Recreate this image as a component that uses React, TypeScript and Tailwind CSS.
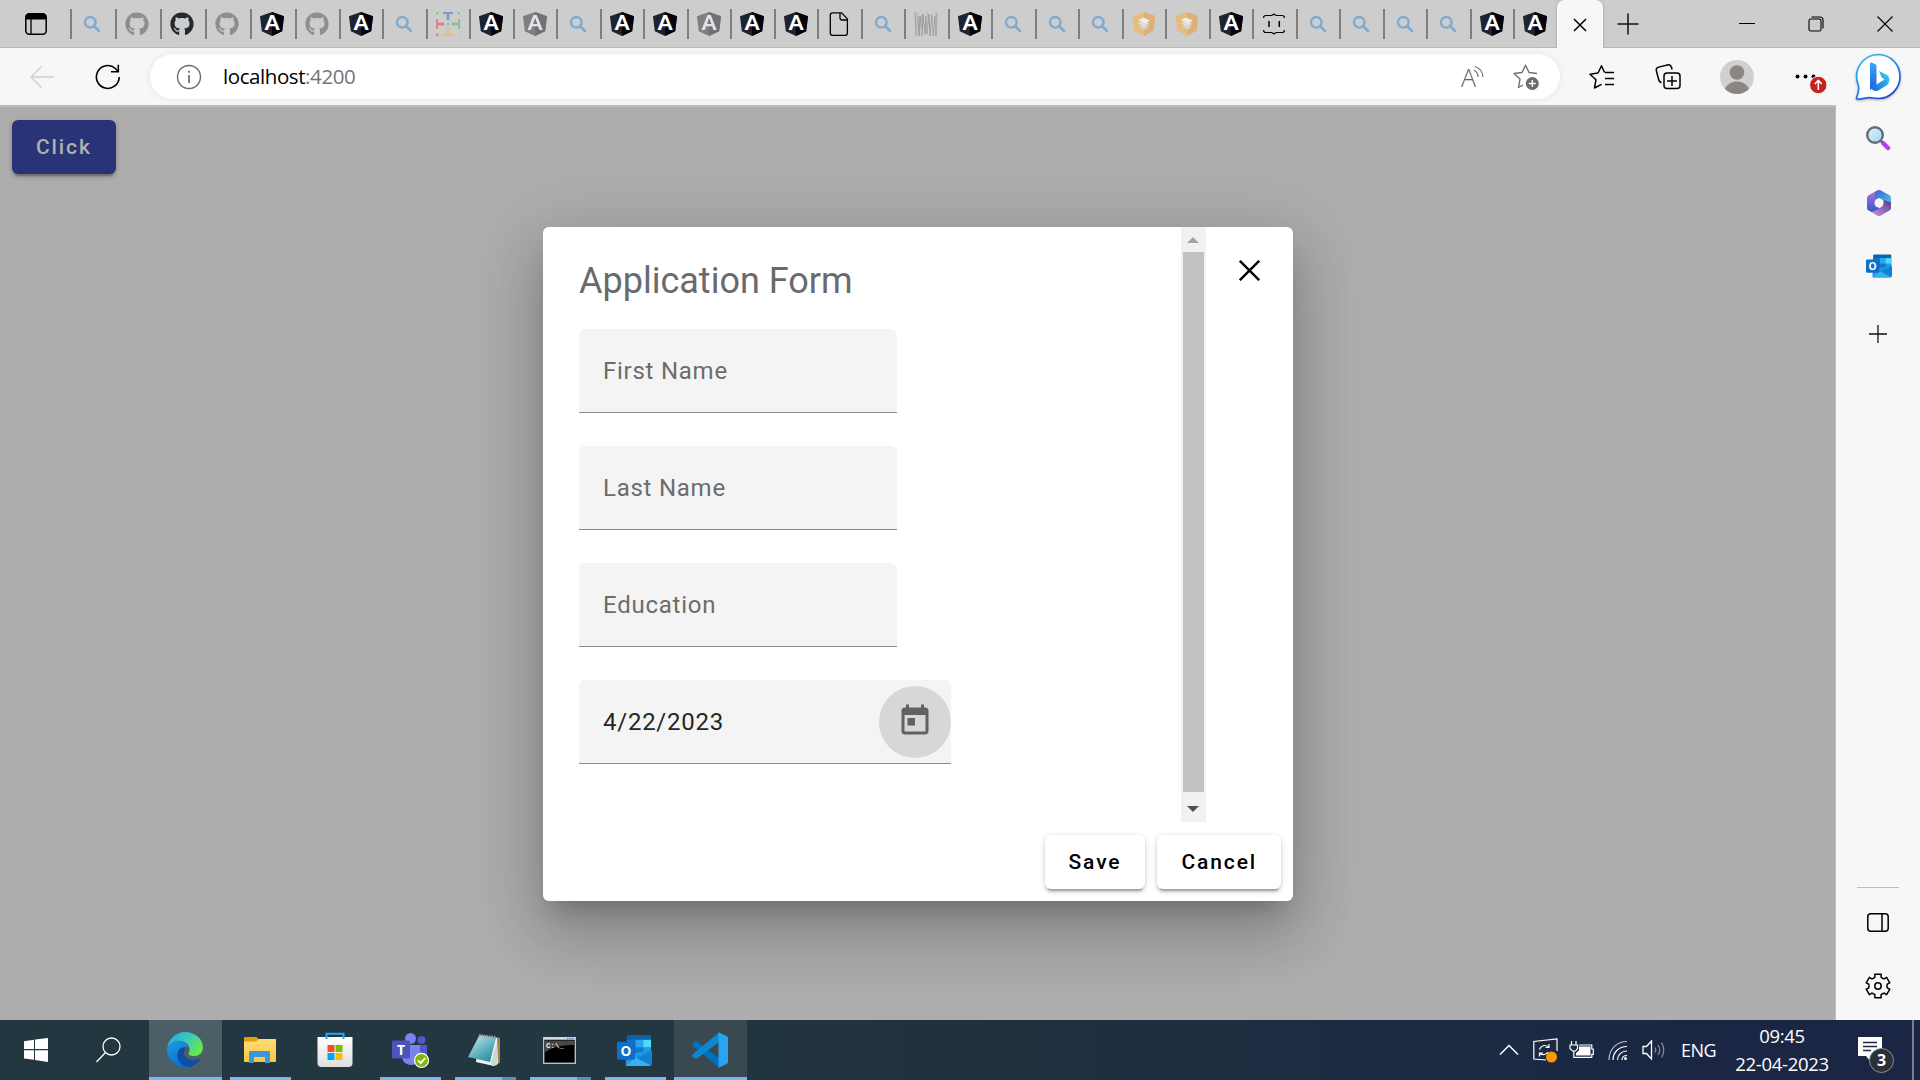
import React from "react";
import { FaGithub } from "react-icons/fa";

type Kind =
  | "search" | "gh" | "ghDark" | "ng" | "ngDim" | "slack" | "file" | "wave" | "stack" | "brace";

const TABS: Kind[] = [
  "search", "gh", "ghDark", "gh", "ng", "gh", "ng", "search", "slack", "ng", "ngDim", "search",
  "ng", "ng", "ngDim", "ng", "ng", "file", "search", "wave", "ng", "search", "search", "search",
  "stack", "stack", "ng", "brace", "search", "search", "search", "search", "ng", "ng",
];

function Angular({ dim = false }: { dim?: boolean }) {
  return (
    <svg width="24" height="24" viewBox="0 0 24 24" className={dim ? "overflow-visible opacity-45" : "overflow-visible"}>
      <path d="M12 0 24 4.2 22.2 19.3 12 24 1.8 19.3 0 4.2Z" fill="#1e232f" />
      <path d="M12 0 24 4.2 22.2 19.3 12 24Z" fill="#02050f" />
      <text x="12" y="18" textAnchor="middle" fill="#fff" fontFamily="Lato, sans-serif" fontWeight="900" fontSize="21">A</text>
    </svg>
  );
}

function TabIcon({ kind }: { kind: Kind }) {
  switch (kind) {
    case "search":
      return (
        <svg width="24" height="24" viewBox="0 0 24 24" fill="none" stroke="#7faad0" strokeWidth="2.3">
          <circle cx="10.3" cy="10.3" r="5.3" />
          <path d="M14 14l5 5" strokeWidth="2.5" strokeLinecap="round" />
        </svg>
      );
    case "gh":
      return <FaGithub size={24} color="#8c8e90" />;
    case "ghDark":
      return <FaGithub size={24} color="#24292e" />;
    case "ng":
      return <Angular />;
    case "ngDim":
      return <Angular dim />;
    case "slack":
      return (
        <svg width="24" height="24" viewBox="0 0 24 24" fill="none" strokeWidth="2">
          <path d="M7 1h10" stroke="#7d9fc4" /><path d="M12 1v7" stroke="#7d9fc4" strokeWidth="3" />
          <path d="M7 23h10" stroke="#e0bd84" /><path d="M12 16v7" stroke="#e0bd84" strokeWidth="3" />
          <path d="M1 7v10" stroke="#d98684" /><path d="M1 12h7" stroke="#d98684" strokeWidth="3" />
          <path d="M23 7v10" stroke="#8cc090" /><path d="M16 12h7" stroke="#8cc090" strokeWidth="3" />
          <path d="M10.5 12h3" stroke="#86c6dd" strokeWidth="3" />
          <path d="M.7 3V.7H3" stroke="#8cc090" strokeWidth="1.2" /><path d="M21 .7h2.3V3" stroke="#8cc090" strokeWidth="1.2" />
          <path d="M.7 21v2.3H3" stroke="#d98684" strokeWidth="1.2" /><path d="M21 23.3h2.3V21" stroke="#e0bd84" strokeWidth="1.2" />
        </svg>
      );
    case "file":
      return (
        <svg width="24" height="24" viewBox="0 0 24 24" fill="none" stroke="#000" strokeWidth="1.3">
          <path d="M5.5.9h9.2l5.7 6v14.2a2.2 2.2 0 0 1-2.2 2.2H5.5a2.2 2.2 0 0 1-2.2-2.2V3.1A2.2 2.2 0 0 1 5.5.9Z" />
          <path d="M13 .9v5.3a1.8 1.8 0 0 0 1.8 1.8h5.6" />
        </svg>
      );
    case "wave":
      return (
        <svg width="24" height="24" viewBox="0 0 24 24" fill="none" stroke="#9d9d9d" strokeWidth="1">
          <path d="M1 0l1 24M4 4l1 20 1-20 2 20 1-22 2 20 1-18 1 18 2-20 1 22 2-21 1 21 2-20 1 20 1-23" />
          <path d="M3 0v22M7.5 3v20M13 0v22M18.5 2v22M22 0v18" stroke="#b3b3b3" />
        </svg>
      );
    case "stack":
      return (
        <svg width="24" height="24" viewBox="0 0 24 24">
          <path d="M12 0 23 4 21.8 18.5 12 24 2.2 18.5 1 4Z" fill="#e6bc80" />
          <path d="M12 0 23 4 21.8 18.5 12 24Z" fill="#deb076" />
          <path d="M6.5 14.5l3.5-2 7.5 2-5 3.5z" fill="#d5d0c8" />
          <path d="M6 11.5l4-2 7.5 2-5 3.5z" fill="#e2ded6" />
          <path d="M6 8l5-2.5 7 3-5 3.5z" fill="#efece6" />
        </svg>
      );
    case "brace":
      return (
        <svg width="24" height="24" viewBox="0 0 24 24" fill="none" stroke="#000" strokeWidth="1.2">
          <path d="M1.5 6c0-1.7 1-2.5 2.5-2.5h5c1.5 0 2-.8 3-1.5 1 .7 1.5 1.5 3 1.5h5c1.5 0 2.5.8 2.5 2.5" />
          <path d="M1.5 18c0 1.7 1 2.5 2.5 2.5h5c1.5 0 2 .8 3 1.5 1-.7 1.5-1.5 3-1.5h5c1.5 0 2.5-.8 2.5-2.5" />
          <path d="M7 9v6M17.3 9v6" strokeWidth="1.5" />
        </svg>
      );
  }
}

function TabStrip() {
  return (
    <div className="flex h-12 items-stretch bg-[#cdcdcd] shadow-[inset_0_-1px_0_#b9b9b9]">
      <div className="flex w-[70px] items-center pl-[25px]">
        <svg width="22" height="22" viewBox="0 0 22 22">
          <rect x=".8" y=".8" width="20.4" height="20.4" rx="3.5" fill="none" stroke="#000" strokeWidth="1.5" />
          <path d="M.8 6.5V4A3.2 3.2 0 0 1 4 .8h14A3.2 3.2 0 0 1 21.2 4v2.5z" fill="#000" />
          <path d="M6 6v15" stroke="#000" strokeWidth="1.3" />
        </svg>
      </div>
      {TABS.map((k, i) => (
        <div
          key={i}
          className={`flex shrink-0 items-center ${i < 5 ? "w-[45px]" : i % 2 ? "w-11" : "w-[43px]"}`}
        >
          <div className="h-[30px] w-[10px] border-l-2 border-[#7f7f7f]" />
          <div className="flex h-6 w-6 items-center justify-center">
            <TabIcon kind={k} />
          </div>
        </div>
      ))}
      <div className="flex w-[46px] items-center justify-center rounded-t-[7px] bg-[#f7f7f7] pt-px shadow-[0_0_3px_#999]">
        <svg width="14" height="14" viewBox="0 0 14 14" stroke="#000" strokeWidth="1.5"><path d="M1 1l12 12M13 1 1 13" /></svg>
      </div>
      <div className="flex w-[50px] items-center justify-center pb-px">
        <svg width="22" height="22" viewBox="0 0 22 22" stroke="#111" strokeWidth="1.5"><path d="M11 .5v21M.5 11h21" /></svg>
      </div>
      <div className="flex flex-1 items-center justify-end pr-px">
        <div className="flex w-[69px] justify-center">
          <svg width="16" height="16" viewBox="0 0 16 16" stroke="#000"><path d="M0 7.500h16" /></svg>
        </div>
        <div className="flex w-[69px] justify-center">
          <svg width="16" height="16" viewBox="0 0 16 16" fill="none" stroke="#000" strokeWidth="1.1">
            <rect x="1" y="3" width="12" height="12" rx="1.8" />
            <path d="M3.5 1h8.5a3 3 0 0 1 3 3v8.5" />
          </svg>
        </div>
        <div className="flex w-[69px] justify-center">
          <svg width="16" height="16" viewBox="0 0 16 16" stroke="#000" strokeWidth="1.1"><path d="M.5.5l15 15M15.5.5l-15 15" /></svg>
        </div>
      </div>
    </div>
  );
}

function Toolbar() {
  return (
    <div className="flex h-[57px] items-center bg-[#f7f7f7]">
      <div className="flex w-[84px] justify-center">
        <svg width="24" height="24" viewBox="0 0 24 24" fill="none" stroke="#cfcfcf" strokeWidth="1.4"><path d="M24 12H1M11.5 1.5 1 12l10.5 10.5" /></svg>
      </div>
      <div className="flex w-12 justify-center">
        <svg width="26" height="26" viewBox="0 0 26 26" fill="none" stroke="#000" strokeWidth="1.6">
          <path d="M24.2 13a11.4 11.4 0 1 1-3.8-8.5L23 7.2" />
          <path d="M23.3.8v7H16" />
        </svg>
      </div>
      <div className="ml-[18px] flex h-[45px] w-[1410px] items-center rounded-full bg-white pr-[7px] pl-[26px] shadow-[0_0_6px_#e2e2e2]">
        <svg width="26" height="26" viewBox="0 0 26 26" fill="none" stroke="#6b6b6b" strokeWidth="1.4">
          <circle cx="13" cy="13" r="11.5" /><path d="M13 11v8" strokeWidth="1.7" /><circle cx="13" cy="7.8" r="1.1" fill="#6b6b6b" stroke="none" />
        </svg>
        <span className="ml-[21px] flex-1 font-['Open_Sans',sans-serif] text-[20.5px] tracking-[-0.42px] text-black">
          localhost<span className="text-[#767676]">:4200</span>
        </span>
        <div className="flex w-[54px] justify-center pl-[2px]">
          <svg width="24" height="24" viewBox="0 0 24 24" fill="none" stroke="#757575" strokeWidth="1.3" className="overflow-visible">
            <text x="0" y="22" fontSize="25" fontFamily="Open Sans, sans-serif" fontWeight="300" fill="#656565" stroke="none" textLength="15" lengthAdjust="spacingAndGlyphs">A</text>
            <path d="M13 5a8 8 0 0 1 4 7M14 1.5a12 12 0 0 1 8 10.500" />
          </svg>
        </div>
        <div className="flex w-[54px] justify-center">
          <svg width="26" height="26" viewBox="0 0 26 26" fill="none" stroke="#6f6f6f" strokeWidth="1.4" strokeLinejoin="round">
            <path d="M24 9.5l-8-1L12.5 1.2 9 8.500l-8 1 6 5.500-1.500 8.500 4.500-2.500" />
            <circle cx="19.3" cy="19.5" r="6.500" fill="#6b6b6b" stroke="none" />
            <path d="M19.3 16v7M15.8 19.500h7" stroke="#fff" />
          </svg>
        </div>
      </div>
      <div className="ml-[9px] flex w-[66px] justify-center">
        <svg width="26" height="26" viewBox="0 0 26 26" fill="none" stroke="#000" strokeWidth="1.5" strokeLinejoin="round">
          <path d="M15.5 8.500 12.500 1.700 9 9l-8 1.200 6 5.500-1.500 8.300 7-3.700M16 8.500h9M16 14.500h9M16 20.500h9" />
        </svg>
      </div>
      <div className="flex w-[66px] justify-center">
        <svg width="26" height="26" viewBox="0 0 26 26" fill="none" stroke="#000" strokeWidth="1.5">
          <rect x="9" y="9" width="16" height="15.5" rx="3" /><path d="M17 12v10M12 17h10" />
          <path d="M6.5 18.500C4.500 18.500 4 17 3.500 15L1.300 6.500C1 4.500 2 3.500 3.500 3.100l9-2.200c2-.5 3.500.5 4 2.400l.6 2.200" />
        </svg>
      </div>
      <div className="flex w-[72px] justify-center">
        <svg width="34" height="34" viewBox="0 0 34 34">
          <circle cx="17" cy="17" r="17" fill="#d2d0cd" /><circle cx="17" cy="12.5" r="7.300" fill="#8a8684" />
          <path d="M5 29c2-5 7-7.500 12-7.500S27 24 29 29a17 17 0 0 1-24 0z" fill="#8a8684" />
        </svg>
      </div>
      <div className="flex w-[63px] justify-center pl-[10px]">
        <svg width="34" height="34" viewBox="0 0 34 34">
          <circle cx="4.5" cy="16.5" r="2" /><circle cx="12.5" cy="16.5" r="2" /><circle cx="20.5" cy="16.5" r="2" />
          <circle cx="25.3" cy="25" r="8.7" fill="#c5221f" stroke="#f7f7f7" />
          <path d="M25.3 30V20.500M21.800 24l3.500-3.700 3.500 3.700" stroke="#fff" strokeWidth="1.6" fill="none" />
        </svg>
      </div>
      <div className="flex w-[84px] justify-center">
        <svg width="46" height="48" viewBox="0 0 46 48" className="drop-shadow-[0_1px_1px_rgba(0,0,0,0.3)]">
          <defs>
            <linearGradient id="bingRing" x1="0" y1="0" x2=".6" y2="1"><stop stopColor="#2bc5f4" /><stop offset=".5" stopColor="#2b8ff0" /><stop offset="1" stopColor="#1d46d6" /></linearGradient>
            <linearGradient id="bingB" x1="0" y1="0" x2="0" y2="1"><stop stopColor="#3ea6f5" /><stop offset="1" stopColor="#1a5fe0" /></linearGradient>
            <linearGradient id="bingC" x1="0" y1="1" x2="1" y2="0"><stop stopColor="#1a5be0" /><stop offset="1" stopColor="#3bd8ee" /></linearGradient>
          </defs>
          <path d="M23 1.500a22 22 0 1 1 0 44c-4 0-6-1-9-.8-4 .2-8 1.800-12 1.300-.8-.1-.5-1.200-.3-1.500 1.500-4 3-8 1.500-13A22 22 0 0 1 23 1.500z" fill="#fff" stroke="url(#bingRing)" strokeWidth="1.7" />
          <path d="M15 10.500q0-1.500 1.500-1l3.500 1.500q1.500.6 1.500 2V32L15 37z" fill="url(#bingB)" />
          <path d="M15 31.500c0 5 5 8 9 5.500l7.500-4.500c3.500-2.500 4-8 .5-10.500l-8-4 2.500 6 3 2.500-8 5z" fill="url(#bingC)" />
        </svg>
      </div>
    </div>
  );
}

function OutlookLogo({ size }: { size: number }) {
  return (
    <svg width={size} height={size} viewBox="0 0 36 36">
      <rect x="10" y="2" width="25" height="20" rx="1.5" fill="#0a64ad" />
      <rect x="10" y="7" width="9" height="14" fill="#1176c4" /><rect x="19" y="7" width="8" height="8" fill="#28a8ea" /><rect x="27" y="7" width="8" height="8" fill="#50d9ff" />
      <rect x="19" y="15" width="8" height="8" fill="#0f78d4" /><rect x="27" y="15" width="8" height="8" fill="#1a9be2" />
      <path d="M9 22l26-4v14.500a1.500 1.500 0 0 1-1.500 1.500h-23A1.500 1.500 0 0 1 9 32.500z" fill="#2196e3" />
      <path d="M36 18v15L19 26z" fill="#1580cf" /><path d="M9 34h26L19 25z" fill="#35b1ef" />
      <rect x="0" y="9" width="18.5" height="18.5" rx="1.5" fill="#0c6fc9" />
      <text x="9.2" y="23.3" textAnchor="middle" fill="#fff" fontFamily="Open Sans, sans-serif" fontWeight="700" fontSize="14">O</text>
    </svg>
  );
}

const gearPath = (() => {
  const pts: string[] = [];
  for (let t = 0; t < 6; t++) {
    for (const [off, r] of [[-27, 9], [-19, 9.4], [-15, 12.2], [15, 12.2], [19, 9.4], [27, 9]]) {
      const a = ((t * 60 + off - 90) * Math.PI) / 180;
      pts.push(`${(13 + r * Math.cos(a)).toFixed(2)} ${(13 + r * Math.sin(a)).toFixed(2)}`);
    }
  }
  return `M${pts.join("L")}Z`;
})();

function Sidebar() {
  return (
    <div className="flex w-[84px] flex-col items-center bg-[#f7f7f7] pt-[20px]">
      <svg width="26" height="26" viewBox="0 0 26 26">
        <defs><linearGradient id="lens" x1="0" y1="0" x2="1" y2="1"><stop stopColor="#ddf2fd" /><stop offset="1" stopColor="#9fd6f8" /></linearGradient></defs>
        <circle cx="10" cy="10" r="7.8" fill="url(#lens)" stroke="#6b6b6b" strokeWidth="2.4" />
        <path d="M16 16l3 3" stroke="#555" strokeWidth="2.5" /><path d="M18.5 18.5l4.500 4.500" stroke="#b43df5" strokeWidth="4.5" strokeLinecap="round" />
      </svg>
      <svg width="26" height="28" viewBox="0 0 26 28" className="mt-[38px] ml-[2px]">
        <defs>
          <linearGradient id="m1" x1="0" y1="0" x2="0" y2="1"><stop stopColor="#b36fe0" /><stop offset="1" stopColor="#3557c9" /></linearGradient>
          <linearGradient id="m2" x1="0" y1="0" x2="1" y2="1"><stop stopColor="#3c5ecb" /><stop offset="1" stopColor="#40d0f2" /></linearGradient>
          <linearGradient id="m3" x1="0" y1="1" x2="1" y2="0"><stop stopColor="#c795ee" /><stop offset="1" stopColor="#593a86" /></linearGradient>
        </defs>
        <path d="M11 1.500 3 6a3.500 3.500 0 0 0-2 3v10a3 3 0 0 0 2 2.700l3 1.500L14 20l-3-5V6z" fill="url(#m1)" />
        <path d="M11 1.500q2-1 4 0l8 4.500q2 1 2 3v7l-7-4-5-3-4 4V5q0-2 2-3.500z" fill="url(#m2)" />
        <path d="M25 13v6a3 3 0 0 1-2 2.700l-8 4.700q-2 1-4 0l-5-3 8-4.400 4-8 4 1.500z" fill="url(#m3)" />
        <circle cx="13" cy="14" r="4.5" fill="#f7f7f7" />
      </svg>
      <div className="mt-[36px] ml-[2px]"><OutlookLogo size={26} /></div>
      <svg width="20" height="20" viewBox="0 0 20 20" stroke="#111" strokeWidth="1.3" className="mt-[45px] mr-px"><path d="M10 1v18M1 10h18" /></svg>
      <div className="flex-1" />
      <div className="h-px w-[42px] bg-[#bdbdbd]" />
      <svg width="22" height="19" viewBox="0 0 22 19" fill="none" stroke="#000" strokeWidth="1.5" className="mt-[25px]">
        <rect x=".8" y=".8" width="20.4" height="17.4" rx="3" /><path d="M15 1v17" />
      </svg>
      <svg width="26" height="26" viewBox="0 0 26 26" fill="none" stroke="#000" strokeWidth="1.5" strokeLinejoin="round" className="mt-[41px] mb-[21px]">
        <path d={gearPath} /><circle cx="13" cy="13" r="3.2" />
      </svg>
    </div>
  );
}

const BTN = "flex h-[54px] items-center rounded-[6px] px-6 pt-[2px] font-['Roboto',sans-serif] text-[21px] font-medium tracking-[1.875px] shadow-[0_4.5px_1.5px_-3px_rgba(0,0,0,0.2),0_3px_3px_rgba(0,0,0,0.14),0_1.5px_7.5px_rgba(0,0,0,0.12)]";

function Field({ label }: { label: string }) {
  return (
    <div className="flex h-[84px] w-[318px] items-center rounded-t-[6px] border-b border-[#8b8b8b] bg-[#f4f4f4] pl-6 text-[24px] tracking-[0.75px] text-[#6c6c6c]">
      {label}
    </div>
  );
}

function Dialog() {
  return (
    <div className="mt-[120px] ml-[543px] flex h-[674px] w-[750px] flex-col rounded-[6px] bg-white font-['Roboto',sans-serif] shadow-[0_16px_22px_-10px_rgba(0,0,0,0.2),0_36px_57px_4px_rgba(0,0,0,0.14),0_13px_69px_12px_rgba(0,0,0,0.12)]">
      <div className="flex h-[595px]">
        <div className="flex w-[638px] flex-col pt-[30px] pl-9">
          <h2 className="mb-[24px] text-[36px] leading-[48px] text-[#6a6a6a]">Application Form</h2>
          <div className="flex flex-col gap-[33px]">
            <Field label="First Name" />
            <Field label="Last Name" />
            <Field label="Education" />
            <div className="flex h-[84px] w-[372px] items-center justify-between rounded-t-[6px] border-b border-[#8b8b8b] bg-[#f4f4f4] pl-6 text-[24px] tracking-[0.75px] text-[#262626]">
              4/22/2023
              <div className="flex h-[72px] w-[72px] items-center justify-center rounded-full bg-[#d7d7d7]">
                <svg width="36" height="36" viewBox="0 0 24 24" fill="#616161" className="mb-px">
                  <path d="M19 3h-1V1h-2v2H8V1H6v2H5c-1.11 0-1.99.9-1.99 2L3 19c0 1.1.89 2 2 2h14c1.1 0 2-.9 2-2V5c0-1.1-.9-2-2-2zm0 16H5V8h14v11zM7 10h5v5H7z" />
                </svg>
              </div>
            </div>
          </div>
        </div>
        <div className="flex w-[25px] flex-col items-center bg-[#f1f1f1]">
          <div className="flex h-[25px] items-center pt-px"><div className="mr-px h-0 w-0 border-x-[6px] border-b-[6px] border-x-transparent border-b-[#a3a3a3]" /></div>
          <div className="h-[540px] w-[21px] bg-[#c1c1c1]" />
          <div className="flex flex-1 items-center pt-1"><div className="mr-px h-0 w-0 border-x-[6px] border-t-[6px] border-x-transparent border-t-[#505050]" /></div>
        </div>
        <div className="flex flex-1 justify-center pt-[33px] pr-px">
          <svg width="21" height="21" viewBox="0 0 21 21" stroke="#000" strokeWidth="2.4"><path d="M.8.8l19.400 19.400M20.200.8.8 20.200" /></svg>
        </div>
      </div>
      <div className="flex justify-end gap-3 pt-[13px] pr-3">
        <button className={`${BTN} bg-white text-black`}>Save</button>
        <button className={`${BTN} bg-white text-black`}>Cancel</button>
      </div>
    </div>
  );
}

function EdgeLogo() {
  return (
    <svg width="36" height="36" viewBox="0 0 36 36">
      <defs>
        <linearGradient id="e1" x1="0" y1="0" x2="1" y2=".6"><stop stopColor="#2aa6dd" /><stop offset=".5" stopColor="#36c6c3" /><stop offset="1" stopColor="#6ae84f" /></linearGradient>
        <linearGradient id="e2" x1="0" y1="0" x2=".4" y2="1"><stop stopColor="#1b9de2" /><stop offset="1" stopColor="#0a6fd4" /></linearGradient>
      </defs>
      <path d="M.3 16A18 18 0 0 1 18 0c10 0 18 7 18 15.500 0 5-4 8.500-9 8.500-4 0-6.500-1.500-5-3.500 1-1.500 1-6-2-9C14 7 4 8 .3 16z" fill="url(#e1)" />
      <path d="M0 18C1 12 7 9 12 9c4.500 0 9 2.500 9.500 7-2-2-5-2-7 0-5 5-1 17 8.500 18.700A18 18 0 0 1 0 18z" fill="url(#e2)" />
      <path d="M14.500 16C8 18 8 34 23 34.900c4-.9 8-3.900 10-7.400.4-.8-.3-1-1-.7-7 3-15 .2-15-6.300 0-2 .8-3.500 1.500-4.500-1.300-.7-2.700-.6-4 0z" fill="#0c4f9e" />
    </svg>
  );
}

function TaskItem({ children, active = "", bar = "" }: { children: React.ReactNode; active?: string; bar?: string }) {
  return (
    <div className={`flex h-[60px] w-[73px] flex-col items-center ${active}`}>
      <div className="flex h-[57px] items-center justify-center pt-[3px] pr-[2px]">{children}</div>
      {bar === "full" && <div className="h-[3px] w-[73px] bg-[#76b9ed]" />}
      {bar === "one" && <div className="h-[3px] w-[61px] bg-[#76b9ed]" />}
      {bar === "two" && <div className="flex h-[3px] w-[61px]"><div className="w-[47px] bg-[#76b9ed]" /><div className="w-[14px] bg-[#5c8fb8]" /></div>}
    </div>
  );
}

function Taskbar() {
  return (
    <div className="flex h-[60px] items-start bg-linear-to-r from-[#22373f] from-35% via-[#20313f] via-50% to-[#1a2643] to-90% font-['Open_Sans',sans-serif] text-white">
      <div className="flex h-[60px] w-[72px] items-center justify-center">
        <svg width="24" height="24" viewBox="0 0 24 24" fill="#fff"><path d="M0 3.200 10 1.800V11H0zM11 1.600 24 0v11H11zM0 12.200h10v9.600L0 20.500zM11 12.200h13V24l-13-1.900z" /></svg>
      </div>
      <div className="flex h-[60px] w-[77px] items-center pl-6">
        <svg width="25" height="26" viewBox="0 0 25 26" fill="none" stroke="#fff" strokeWidth="1.3"><circle cx="15.5" cy="9.5" r="8.5" /><path d="M9.5 15.500.5 25" /></svg>
      </div>
      <div className="flex gap-[2px]">
        <TaskItem active="bg-[#4d5f66]" bar="full"><EdgeLogo /></TaskItem>
        <TaskItem bar="one">
          <svg width="32" height="26" viewBox="0 0 32 26">
            <defs><linearGradient id="fo" x1="0" y1="0" x2="0" y2="1"><stop stopColor="#ffdc78" /><stop offset="1" stopColor="#fbc63f" /></linearGradient></defs>
            <path d="M0 1a1 1 0 0 1 1-1h11.500l2 2H31a1 1 0 0 1 1 1v3H0z" fill="#e19d0a" />
            <path d="M0 4.500h12l3-2.500h16a1 1 0 0 1 1 1v21a1 1 0 0 1-1 1H1a1 1 0 0 1-1-1z" fill="url(#fo)" />
            <path d="M5 26V15a1 1 0 0 1 1-1h19a1 1 0 0 1 1 1v11h-5v-6H10v6z" fill="#3a96dd" />
          </svg>
        </TaskItem>
        <TaskItem>
          <svg width="36" height="36" viewBox="0 0 36 36">
            <defs><linearGradient id="st" x1="0" y1="0" x2="0" y2="1"><stop stopColor="#fff" /><stop offset="1" stopColor="#dfdfdf" /></linearGradient></defs>
            <path d="M.5 5h35v26a4 4 0 0 1-4 4h-27a4 4 0 0 1-4-4z" fill="url(#st)" />
            <path d="M9.5 7V1.800h17V7" fill="none" stroke="#22a8f0" strokeWidth="2" />
            <path d="M10.5 13h7v7h-7z" fill="#f25022" /><path d="M18.5 13h7v7h-7z" fill="#7fba00" />
            <path d="M10.5 21h7v7h-7z" fill="#00a4ef" /><path d="M18.5 21h7v7h-7z" fill="#ffb900" />
          </svg>
        </TaskItem>
        <TaskItem bar="one">
          <svg width="38" height="36" viewBox="0 0 38 36">
            <circle cx="19.5" cy="6.5" r="5.5" fill="#7b83eb" /><circle cx="30.5" cy="8" r="4" fill="#5059c9" />
            <path d="M25 13h11v12a6 6 0 0 1-11 4z" fill="#5059c9" /><path d="M11 13h18v12c0 5-4 8-9 8s-9-4-9-8z" fill="#7b83eb" />
            <rect x="1" y="8.5" width="18" height="18" rx="1.5" fill="#4b53bc" />
            <text x="10" y="22.5" textAnchor="middle" fill="#fff" fontFamily="Open Sans, sans-serif" fontWeight="700" fontSize="14">T</text>
            <circle cx="30.5" cy="28.4" r="7" fill="#7fba00" stroke="#fff" strokeWidth="1.2" /><path d="M27 28.400l2.700 2.700 4.500-5" stroke="#fff" strokeWidth="1.9" fill="none" />
          </svg>
        </TaskItem>
        <TaskItem bar="two">
          <svg width="34" height="34" viewBox="0 0 34 34" className="mr-px">
            <defs><linearGradient id="np" x1="0" y1="0" x2=".7" y2="1"><stop stopColor="#d0eef2" /><stop offset=".6" stopColor="#61b3bf" /><stop offset="1" stopColor="#2f8f9c" /></linearGradient></defs>
            <path d="M29 4l4 1v25l-6 1z" fill="#a98147" /><path d="M12 2l18 3 1 26-4 2L9 29z" fill="#eef2f2" />
            <path d="M12 3l17 2-6 24L1 24z" fill="url(#np)" /><path d="M24 29l6-20v23l-5 1z" fill="#c9d7d9" />
            <path d="M12 2.500l17 2" stroke="#99a0a1" strokeWidth="3" strokeDasharray="1.5 1" />
          </svg>
        </TaskItem>
        <TaskItem bar="two">
          <svg width="33" height="27" viewBox="0 0 33 27">
            <rect x=".7" y=".7" width="31.6" height="25.6" fill="#000" stroke="#b9bfc3" strokeWidth="1.4" />
            <path d="M1.4 3.500h30.200V8C18 8 8 10 1.400 16z" fill="#484848" /><path d="M.7 1.500h31.600" stroke="#d5dce2" strokeWidth="2.5" /><path d="M24 1.500h7" stroke="#3c74b0" strokeWidth="1.2" strokeDasharray="1.5 1" />
            <text x="3" y="10.5" fill="#eee" fontFamily="Liberation Mono, monospace" fontWeight="700" fontSize="7.5">C:\_</text>
          </svg>
        </TaskItem>
        <TaskItem bar="one"><OutlookLogo size={35} /></TaskItem>
        <TaskItem active="bg-[#39494f]" bar="full">
          <svg width="36" height="36" viewBox="0 0 36 36">
            <path d="M.5 11.500 3 9.400q1-.7 2 0L27 26v9.500L.5 13.500q-.8-1 0-2z" fill="#0070bd" />
            <path d="M.5 24.500 3 26.600q1 .7 2 0L27 10V.5L.5 22.500q-.8 1 0 2z" fill="#0e87d2" />
            <path d="M26.5.3 35 4.300q1 .5 1 1.700v24q0 1.200-1 1.700l-8.500 4z" fill="#2aa3f2" />
          </svg>
        </TaskItem>
      </div>
      <div className="flex-1" />
      <div className="flex h-[60px] items-center">
        <div className="flex w-[36px] justify-center">
          <svg width="20" height="12" viewBox="0 0 20 12" fill="none" stroke="#fff" strokeWidth="1.5"><path d="M1 10.500l9-9 9 9" /></svg>
        </div>
        <div className="flex w-[36px] justify-center">
          <svg width="25" height="25" viewBox="0 0 25 25" fill="none" stroke="#fff" strokeWidth="1.2">
            <path d="M13 22 .8 21V3.500L24 1v12" /><path d="M6.5 11.500a5.500 5.500 0 0 1 9-2.500M16 6v3.500h-3.500M15 14a5.500 5.500 0 0 1-8 1.500M6.500 18.500V15H10" />
            <circle cx="18.5" cy="19" r="5.5" fill="#ff9800" stroke="none" />
          </svg>
        </div>
        <div className="flex w-[36px] justify-center">
          <svg width="25" height="20" viewBox="0 0 25 20" fill="none" stroke="#fff" strokeWidth="1.2">
            <path d="M2.5 1v4M7 1v4M1 5h7.500v3.500L6.500 11h-3L1 8.500zM4.800 11v6.300h18v-3h1.500V9h-1.500V5H10" /><path d="M7 15.500h14.500v-9H10v4L7 13z" fill="#fff" stroke="none" />
          </svg>
        </div>
        <div className="flex w-[36px] justify-center pl-[2px]">
          <svg width="20" height="20" viewBox="0 0 20 20" fill="none" stroke="#fff" strokeWidth="1.2">
            <path d="M1 20C1 9 9 1.500 19 1.500" opacity=".7" /><path d="M5 20C5 12 11 6.500 19 6.500M9.500 20c0-5 4-9 9.500-9M14 20c0-2.500 2-4.500 5-4.500" /><circle cx="17.5" cy="18.5" r="1.5" fill="#fff" stroke="none" />
          </svg>
        </div>
        <div className="flex w-[36px] justify-center">
          <svg width="23" height="20" viewBox="0 0 23 20" fill="none" stroke="#fff" strokeWidth="1.3">
            <path d="M1 6.500h3.500l5-5.500v18l-5-5.500H1z" /><g opacity=".45"><path d="M13 7.500q1.500 2.500 0 5M16 5q3.500 5 0 10M19.500 2.500q4.500 7.500 0 15" /></g>
          </svg>
        </div>
        <span className="ml-[10px] w-[36px] text-[18px] tracking-[-0.5px]">ENG</span>
        <div className="ml-[10px] flex w-[110px] flex-col items-center text-[18.5px] leading-[28px] tracking-[-0.3px]">
          <span>09:45</span>
          <span>22-04-2023</span>
        </div>
        <div className="flex w-[75px] pt-[7px] pl-[21px]">
          <svg width="38" height="38" viewBox="0 0 38 38">
            <path d="M0 2h24v19H12v5l-4-5H0z" fill="#fff" /><path d="M5 7.500h14M5 11.500h14M5 15.500h8" stroke="#1b2945" strokeWidth="1.3" />
            <circle cx="23.5" cy="25.5" r="12" fill="#2b2f36" stroke="#8a8f98" strokeWidth="1" />
            <text x="23.5" y="31" textAnchor="middle" fill="#fff" fontFamily="Open Sans, sans-serif" fontWeight="700" fontSize="16">3</text>
          </svg>
        </div>
        <div className="h-[60px] w-[8px] border-l-2 border-[#767d8e]" />
      </div>
    </div>
  );
}

export default function App() {
  return (
    <div className="flex h-[1080px] w-[1920px] flex-col overflow-hidden">
      <TabStrip />
      <Toolbar />
      <div className="flex flex-1">
        <main className="flex w-[1836px] items-start border-t-2 border-r border-[#bdbdbd] bg-[#adadad]">
          <div className="h-0 w-0">
            <button className={`${BTN} mt-[13px] ml-3 bg-[#293476] text-[#b0b0b0]`}>Click</button>
          </div>
          <Dialog />
        </main>
        <Sidebar />
      </div>
      <Taskbar />
    </div>
  );
}
